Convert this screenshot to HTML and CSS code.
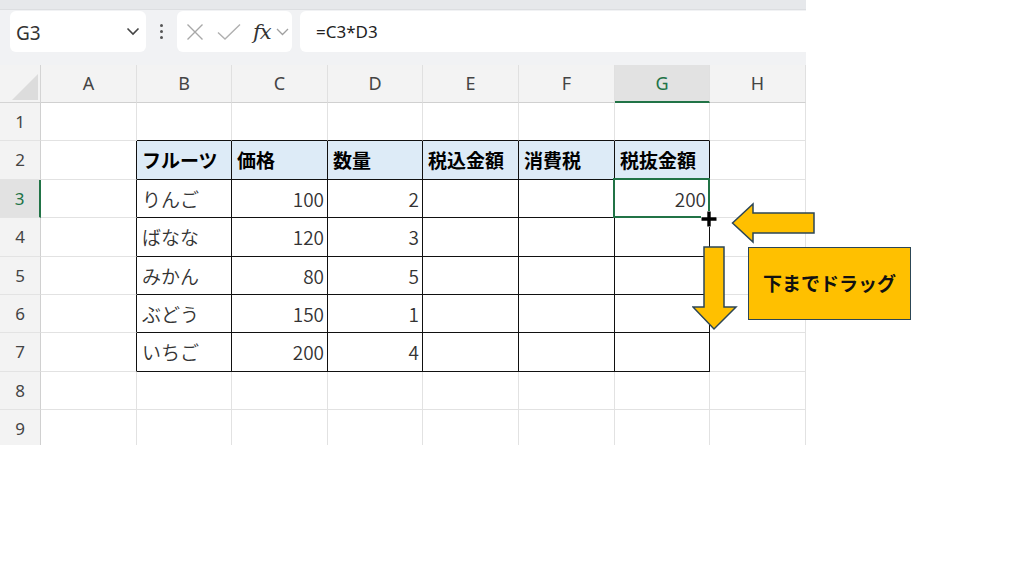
FILE: index.html
```html
<!DOCTYPE html>
<html lang="ja">
<head>
<meta charset="UTF-8">
<meta name="viewport" content="width=device-width, initial-scale=1.0">
<title>Excel</title>
<link rel="stylesheet" href="styles.css">
</head>
<body>
<div class="page">
    <div class="excel">
        <div class="topstrip"></div>
        <div class="fbar">
            <div class="namebox">
                <span class="name">G3</span>
                <svg class="chev" width="14" height="9" viewBox="0 0 14 9"><path d="M1.5 1.5 L7 7 L12.5 1.5" fill="none" stroke="#444" stroke-width="1.6"/></svg>
            </div>
            <div class="dots"><i></i><i></i><i></i></div>
            <div class="fnbox">
                <svg width="18" height="18" viewBox="0 0 18 18"><path d="M1.5 1.5 L16.5 16.5 M16.5 1.5 L1.5 16.5" stroke="#a8a8a8" stroke-width="1.4" fill="none"/></svg>
                <svg width="24" height="18" viewBox="0 0 24 18"><path d="M1 9.5 L8 16 L23 1.5" stroke="#b0b0b0" stroke-width="1.4" fill="none"/></svg>
                <span class="fx">fx</span>
                <svg width="13" height="8" viewBox="0 0 13 8"><path d="M1 1 L6.5 6.5 L12 1" fill="none" stroke="#a0a0a0" stroke-width="1.3"/></svg>
            </div>
            <div class="formula">=C3*D3</div>
        </div>
        <div class="sheet">
            <div class="corner"><svg width="41" height="38" viewBox="0 0 41 38"><polygon points="12,35 38,35 38,9" fill="#dcdcdc"/></svg></div>
            <div class="ch">A</div><div class="ch">B</div><div class="ch">C</div><div class="ch">D</div><div class="ch">E</div><div class="ch">F</div><div class="ch chs">G</div><div class="ch">H</div>

            <div class="rh">1</div>
            <div class="c"></div><div class="c tb"></div><div class="c tb"></div><div class="c tb"></div><div class="c tb"></div><div class="c tb"></div><div class="c tb"></div><div class="c"></div>

            <div class="rh">2</div>
            <div class="c tl"></div>
            <div class="c t th">フルーツ</div><div class="c t th">価格</div><div class="c t th">数量</div><div class="c t th">税込金額</div><div class="c t th">消費税</div><div class="c t th">税抜金額</div>
            <div class="c"></div>

            <div class="rh rhs">3</div>
            <div class="c tl"></div>
            <div class="c t">りんご</div><div class="c t n">100</div><div class="c t n">2</div><div class="c t"></div><div class="c t"></div><div class="c t n sel">200</div>
            <div class="c"></div>

            <div class="rh">4</div>
            <div class="c tl"></div>
            <div class="c t">ばなな</div><div class="c t n">120</div><div class="c t n">3</div><div class="c t"></div><div class="c t"></div><div class="c t"></div>
            <div class="c"></div>

            <div class="rh">5</div>
            <div class="c tl"></div>
            <div class="c t">みかん</div><div class="c t n">80</div><div class="c t n">5</div><div class="c t"></div><div class="c t"></div><div class="c t"></div>
            <div class="c"></div>

            <div class="rh">6</div>
            <div class="c tl"></div>
            <div class="c t">ぶどう</div><div class="c t n">150</div><div class="c t n">1</div><div class="c t"></div><div class="c t"></div><div class="c t"></div>
            <div class="c"></div>

            <div class="rh">7</div>
            <div class="c tl"></div>
            <div class="c t">いちご</div><div class="c t n">200</div><div class="c t n">4</div><div class="c t"></div><div class="c t"></div><div class="c t"></div>
            <div class="c"></div>

            <div class="rh">8</div>
            <div class="c"></div><div class="c"></div><div class="c"></div><div class="c"></div><div class="c"></div><div class="c"></div><div class="c"></div><div class="c"></div>

            <div class="rh">9</div>
            <div class="c"></div><div class="c"></div><div class="c"></div><div class="c"></div><div class="c"></div><div class="c"></div><div class="c"></div><div class="c"></div>
        </div>
    </div>

    <!-- 注釈 -->
    <svg class="cursor" width="20" height="20" viewBox="0 0 20 20">
        <path d="M10 2 V18 M2 10 H18" stroke="#fff" stroke-width="6"/>
        <path d="M10 2.5 V17.5 M2.5 10 H17.5" stroke="#000" stroke-width="3.4"/>
    </svg>
    <svg class="arrow-left" width="86" height="44" viewBox="0 0 86 44">
        <polygon points="1.5,21 22,2 22,11 83,11 83,31 22,31 22,40" fill="#ffc000" stroke="#2c4656" stroke-width="1.5"/>
    </svg>
    <svg class="arrow-down" width="46" height="86" viewBox="0 0 46 86">
        <polygon points="12,1 32,1 32,61 44,61 22,83 1,61 12,61" fill="#ffc000" stroke="#2c4656" stroke-width="1.5"/>
    </svg>
    <div class="label">下までドラッグ</div>
</div>
</body>
</html>
```

FILE: styles.css
```css
*{margin: 0; padding: 0; box-sizing: border-box;}
body{
    background: #fff;
    font-family: "Noto Sans CJK JP", "Noto Sans", sans-serif;
}
.page{
    width: 1024px;
    height: 576px;
    position: relative;
    background: #fff;
}
.excel{
    width: 806px;
    height: 445px;
    overflow: hidden;
    background: #f0f1f3;
}
.topstrip{
    height: 10px;
    background: #e6e8eb;
    border-bottom: 1px solid #dcdee1;
}
.fbar{
    height: 55px;
    display: flex;
    align-items: flex-start;
    padding-top: 1px;
    padding-left: 10px;
    background: #f1f2f4;
}
.namebox{
    width: 136px;
    height: 41px;
    background: #fff;
    border-radius: 6px;
    display: flex;
    align-items: center;
    justify-content: space-between;
    padding: 2px 6px 0 6px;
}
.name{
    font-family: "Noto Sans", sans-serif;
    font-size: 19px;
    color: #333;
}
.chev{
    margin-top: -2px;
}
.dots{
    width: 31px;
    height: 41px;
    display: flex;
    flex-direction: column;
    align-items: center;
    justify-content: center;
    gap: 3px;
}
.dots i{
    width: 3px;
    height: 3px;
    background: #555;
    border-radius: 50%;
}
.fnbox{
    width: 115px;
    height: 41px;
    background: #fff;
    border-radius: 6px;
    display: flex;
    align-items: center;
    padding: 0 0 0 9px;
    gap: 13px;
}
.fnbox .fx{
    font-family: "DejaVu Serif", "Liberation Serif", serif;
    font-style: italic;
    font-size: 21px;
    color: #333;
    margin-left: -1px;
    margin-right: -8px;
    letter-spacing: -1px;
}
.formula{
    flex: 1;
    height: 41px;
    margin-left: 8px;
    background: #fff;
    border-radius: 6px 0 0 6px;
    font-family: "Noto Sans", sans-serif;
    font-size: 17px;
    color: #222;
    line-height: 41px;
    padding-left: 16px;
}
.sheet{
    display: grid;
    grid-template-columns: 41px 96px 95px 96px 95px 96px 96px 95px 96px;
    grid-template-rows: 38px 38px 39px 38px 39px 38px 38px 39px 38px 38px;
    background: #fff;
}
.corner{
    background: #f3f3f3;
    border-right: 1px solid #d4d4d4;
    border-bottom: 1px solid #d4d4d4;
}
.ch{
    background: #f3f3f3;
    border-right: 1px solid #e0e0e0;
    border-bottom: 1px solid #d0d0d0;
    font-family: "Noto Sans", sans-serif;
    font-size: 18px;
    color: #444;
    text-align: center;
    line-height: 36px;
}
.ch.chs{
    background: #e2e2e2;
    color: #217346;
    border-bottom: 2px solid #217346;
}
.rh{
    background: #f3f3f3;
    border-right: 1px solid #d0d0d0;
    border-bottom: 1px solid #e3e3e3;
    font-family: "Noto Sans", sans-serif;
    font-size: 17px;
    color: #444;
    text-align: center;
    line-height: 38px;
}
.rh.rhs{
    background: #e2e2e2;
    color: #217346;
    border-right: 2px solid #217346;
}
.c{
    border-right: 1px solid #e2e2e2;
    border-bottom: 1px solid #e2e2e2;
    font-size: 19px;
    font-weight: 350;
    color: #333;
    line-height: 37px;
    padding: 0 3px 0 5px;
    white-space: nowrap;
}
.c.tb{
    border-bottom-color: #111;
}
.c.tl{
    border-right-color: #111;
}
.c.t{
    border-right-color: #111;
    border-bottom-color: #111;
}
.c.th{
    background: #ddebf7;
    font-weight: bold;
    color: #000;
}
.c.n{
    text-align: right;
}
.c.sel{
    position: relative;
}
.c.sel::after{
    content: "";
    position: absolute;
    left: -2px;
    top: -2px;
    right: -1px;
    bottom: -1px;
    border: 2px solid #217346;
}
.cursor{
    position: absolute;
    left: 699px;
    top: 209px;
}
.arrow-left{
    position: absolute;
    left: 731px;
    top: 202px;
}
.arrow-down{
    position: absolute;
    left: 692px;
    top: 246px;
}
.label{
    position: absolute;
    left: 748px;
    top: 247px;
    width: 163px;
    height: 73px;
    background: #ffc000;
    border: 1.5px solid #2c4656;
    font-size: 19px;
    font-weight: bold;
    color: #111;
    text-align: center;
    line-height: 70px;
}
```
